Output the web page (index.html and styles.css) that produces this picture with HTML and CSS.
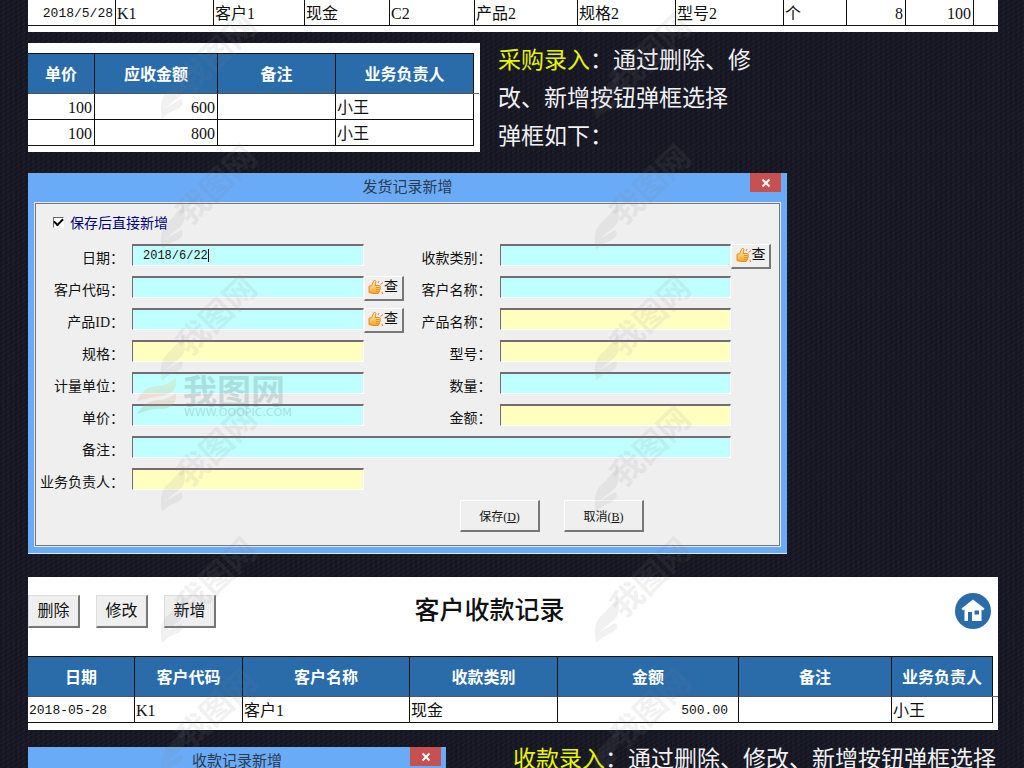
FILE: index.html
```html
<!DOCTYPE html>
<html lang="zh-CN">
<head>
<meta charset="utf-8">
<title>客户收款记录</title>
<link rel="stylesheet" href="styles.css">
</head>
<body>
<svg class="defs" aria-hidden="true">
  <defs>
    <linearGradient id="skin" x1="0" y1="0" x2="0" y2="1"><stop offset="0" stop-color="#fff0b0"/><stop offset="1" stop-color="#fba62c"/></linearGradient>
    <symbol id="hand" viewBox="0 0 16 16">
      <path d="M1 7.500L3.500 6.500L5.500 2.500Q6 .8 7.300 1.500Q8.200 2 7.700 4L7.100 6.500H11.500Q12.800 7 12.200 8.300Q12.800 9.300 11.900 10Q12.500 11 11.500 11.700Q12 12.800 11 13.300L10.200 14.500H4.500L1 13.500Z" fill="url(#skin)" stroke="#e58212" stroke-width=".9"/>
      <path d="M8 8.500h3.800M8 10.500h3.500M8 12.500h3" stroke="#e58212" stroke-width=".7"/>
      <path d="M10 4l1-2M12.500 5.500l2.500-2M13.800 13l1 2" stroke="#d08a3c" stroke-width="1"/>
    </symbol>
  </defs>
</svg>
<main class="page">
  <section class="panel panel-top">
    <table class="grid shipments">
      <colgroup><col><col><col><col><col><col><col><col><col><col><col><col></colgroup>
      <tbody><tr><td class="right date">2018/5/28</td><td>K1</td><td>客户1</td><td>现金</td><td>C2</td><td>产品2</td><td>规格2</td><td>型号2</td><td>个</td><td class="right">8</td><td class="right">100</td><td class="open"></td></tr></tbody>
    </table>
  </section>

  <div class="row intro">
    <section class="panel panel-price">
      <table class="grid prices">
        <colgroup><col><col><col><col></colgroup>
        <thead><tr><th>单价</th><th>应收金额</th><th>备注</th><th>业务负责人</th></tr></thead>
        <tbody>
          <tr><td class="right">100</td><td class="right">600</td><td></td><td>小王</td></tr>
          <tr><td class="right">100</td><td class="right">800</td><td></td><td>小王</td></tr>
        </tbody>
      </table>
    </section>
    <p class="note"><strong>采购录入</strong>：通过删除、修<br>改、新增按钮弹框选择<br>弹框如下：</p>
  </div>

  <section class="dialog dialog-ship">
    <header class="titlebar"><h2>发货记录新增</h2><button class="close" type="button" aria-label="关闭"><svg viewBox="0 0 10 10"><path d="M1.500 1.500l7 7M8.500 1.500l-7 7"/></svg></button></header>
    <form class="client">
      <label class="again"><input type="checkbox" checked>保存后直接新增</label>
      <div class="fields">
        <label for="date">日期：</label><input class="with-caret" id="date" type="text" value="2018/6/22"><span></span>
        <label for="kind">收款类别：</label><input id="kind" type="text"><button class="find" type="button"><svg><use href="#hand"/></svg>查</button>
        <label for="code">客户代码：</label><input id="code" type="text"><button class="find" type="button"><svg><use href="#hand"/></svg>查</button>
        <label for="cname">客户名称：</label><input id="cname" type="text"><span></span>
        <label for="pid">产品ID：</label><input id="pid" type="text"><button class="find" type="button"><svg><use href="#hand"/></svg>查</button>
        <label for="pname">产品名称：</label><input class="auto" id="pname" type="text"><span></span>
        <label for="spec">规格：</label><input class="auto" id="spec" type="text"><span></span>
        <label for="model">型号：</label><input class="auto" id="model" type="text"><span></span>
        <label for="unit">计量单位：</label><input id="unit" type="text"><span></span>
        <label for="qty">数量：</label><input id="qty" type="text"><span></span>
        <label for="price">单价：</label><input id="price" type="text"><span></span>
        <label for="sum">金额：</label><input class="auto" id="sum" type="text"><span></span>
        <label for="memo">备注：</label><input class="wide" id="memo" type="text"><span></span>
        <label for="owner">业务负责人：</label><input class="auto" id="owner" type="text">
      </div>
      <div class="actions"><button class="btn" type="button">保存(<u>D</u>)</button><button class="btn" type="button">取消(<u>B</u>)</button></div>
    </form>
  </section>

  <section class="panel panel-receipts">
    <header class="toolbar">
      <div class="tools"><button class="btn" type="button">删除</button><button class="btn" type="button">修改</button><button class="btn" type="button">新增</button></div>
      <h1>客户收款记录</h1>
      <a class="home" href="#" aria-label="首页"><svg viewBox="0 0 36 36"><circle cx="18" cy="18" r="18" fill="#2a6baa"/><path fill="#fff" fill-rule="evenodd" d="M18 6.500L29.500 15.500L28 17.500L26.500 16.500V28H17V19H13V28H9.500V16.500L8 17.500L6.500 15.500ZM19.500 17.500V21.500H24V17.500Z"/></svg></a>
    </header>
    <table class="grid receipts">
      <colgroup><col><col><col><col><col><col><col></colgroup>
      <thead><tr><th>日期</th><th>客户代码</th><th>客户名称</th><th>收款类别</th><th>金额</th><th>备注</th><th>业务负责人</th></tr></thead>
      <tbody><tr><td class="date">2018-05-28</td><td>K1</td><td>客户1</td><td>现金</td><td class="right date money">500.00</td><td></td><td>小王</td></tr></tbody>
    </table>
  </section>

  <div class="row outro">
    <section class="dialog dialog-receipt">
      <header class="titlebar"><h2>收款记录新增</h2><button class="close" type="button" aria-label="关闭"><svg viewBox="0 0 10 10"><path d="M1.500 1.500l7 7M8.500 1.500l-7 7"/></svg></button></header>
    </section>
    <p class="note"><strong>收款录入</strong>：通过删除、修改、新增按钮弹框选择</p>
  </div>

  <svg class="watermark" aria-hidden="true">
    <defs>
      <pattern id="mark" x="0" y="5" width="434" height="131" patternUnits="userSpaceOnUse">
        <g fill="#808080" fill-opacity=".11">
          <path d="M162 114Q158 94 168 86Q176 79 183 68Q188 84 180 91L164 104L181 94Q186 98 178 104Q170 106 162 114Z"/>
          <text class="mark-text" transform="translate(190 90) rotate(-44)">我图网</text>
        </g>
      </pattern>
      <linearGradient id="leaf" x1="0" y1="0" x2="0" y2="1"><stop offset="0" stop-color="#d8dc50"/><stop offset=".5" stop-color="#f0a080"/><stop offset="1" stop-color="#60b070"/></linearGradient>
    </defs>
    <rect width="100%" height="100%" fill="url(#mark)"/>
    <g opacity=".22">
      <path fill="url(#leaf)" d="M137 401Q142 387 158 386Q168 385 176 378Q178 392 165 395Q153 397 137 401ZM137 414Q146 399 160 400Q169 399 176 393Q177 407 163 409Q152 408 137 414Z"/>
      <text class="logo-text" x="183" y="404">我图网</text>
      <text class="logo-url" x="184" y="416">WWW.OOOPIC.COM</text>
    </g>
  </svg>
</main>
</body>
</html>
```
FILE: styles.css
```css
* { box-sizing: border-box; }
body {
  margin: 0;
  background-color: #191925;
  background-image:
    repeating-linear-gradient(90deg, rgba(0, 0, 0, .14) 0 2px, transparent 2px 5px),
    repeating-linear-gradient(150deg, rgba(80, 84, 110, .1) 0 1px, transparent 1px 4px);
  color: #111;
  font-family: "Liberation Serif", "Noto Sans CJK SC", sans-serif;
  font-size: 16px;
}
h1, h2, p { margin: 0; font-weight: 400; }
button, input { font: inherit; color: inherit; }
.defs { position: absolute; width: 0; height: 0; }
.page {
  position: relative;
  height: 100vh;
  overflow: hidden;
  padding: 0 26px 0 28px;
}
.panel { background: #fff; }
.row { display: flex; align-items: flex-start; }

/* Record tables */
.grid { width: 100%; table-layout: fixed; border-spacing: 0; }
.grid th, .grid td {
  border-right: 1px solid #111;
  border-bottom: 1px solid #111;
  white-space: nowrap;
}
.grid td { height: 26px; padding: 2px 2px 0 1px; line-height: 23px; }
.grid th {
  position: relative;
  height: 41px;
  padding: 2px 2px 0;
  line-height: 37px;
  border-top: 1px solid #111;
  border-bottom-color: #555;
  background: #2a6baa;
  color: #fff;
  font-weight: 700;
}
.grid th:last-child::after {
  content: "";
  position: absolute;
  left: 100%;
  bottom: -1px;
  width: 6px;
  height: 1px;
  background: #666;
}
.grid .open { border-right: 0; }
.grid .right { text-align: right; }
.grid .date { font-family: "Liberation Mono", monospace; font-size: 13px; }
.grid .money { padding-right: 10px; }

.shipments col:nth-child(1) { width: 88px; }
.shipments col:nth-child(2) { width: 98px; }
.shipments col:nth-child(3) { width: 91px; }
.shipments col:nth-child(4), .shipments col:nth-child(5) { width: 85px; }
.shipments col:nth-child(6) { width: 103px; }
.shipments col:nth-child(7) { width: 98px; }
.shipments col:nth-child(8) { width: 108px; }
.shipments col:nth-child(9) { width: 63px; }
.shipments col:nth-child(10) { width: 59px; }
.shipments col:nth-child(11) { width: 68px; }
.shipments col:nth-child(12) { width: 24px; }
.prices col:nth-child(1) { width: 67px; }
.prices col:nth-child(2) { width: 123px; }
.prices col:nth-child(3) { width: 118px; }
.prices col:nth-child(4) { width: 138px; }
.receipts col:nth-child(1) { width: 107px; }
.receipts col:nth-child(2) { width: 108px; }
.receipts col:nth-child(3) { width: 167px; }
.receipts col:nth-child(4) { width: 148px; }
.receipts col:nth-child(5) { width: 181px; }
.receipts col:nth-child(6) { width: 153px; }
.receipts col:nth-child(7) { width: 101px; }

.panel-top { padding-bottom: 6px; }
.intro { margin-top: 11px; gap: 18px; }
.panel-price { flex: 0 1 452px; padding: 10px 6px 6px 0; }
.panel-receipts { margin-top: 23px; padding: 16px 5px 7px 0; }

.note {
  color: #f2f2f5;
  font-family: "Noto Sans CJK SC", sans-serif;
  font-size: 23px;
  line-height: 38px;
}
.note strong { color: #e6f500; font-weight: inherit; }
.intro .note { margin: -4px 0 -1px; }

/* Dialog windows */
.dialog { background: #6aabf7; }
.dialog-ship {
  max-width: 759px;
  margin-top: 21px;
  padding: 0 6px 6px;
  border-bottom: 1px solid #dcebfb;
}
.titlebar { position: relative; height: 29px; }
.titlebar h2 {
  color: #2c3a4c;
  font-family: "Noto Sans CJK SC", sans-serif;
  font-size: 15px;
  line-height: 25px;
  text-align: center;
}
.close {
  position: absolute;
  top: 0;
  right: 0;
  display: grid;
  place-items: center;
  width: 31px;
  height: 19px;
  padding: 0;
  border: 0;
  background: #c75050;
}
.close svg { width: 10px; height: 10px; stroke: #fff; stroke-width: 2; }
.client {
  padding: 8px 9px 14px 0;
  border: 1px solid #e6e6e6;
  outline: 1px solid #777;
  outline-offset: -2px;
  background: #efefef;
}
.again {
  display: flex;
  align-items: center;
  gap: 6px;
  height: 22px;
  margin-left: 18px;
  color: #000080;
  font-size: 14px;
}
.again input {
  appearance: none;
  width: 11px;
  height: 11px;
  margin: 0;
  border: 1px solid #fff;
  border-top-color: #666;
  border-left-color: #666;
  background: #fff;
  display: grid;
  place-items: center;
}
.again input:checked::after {
  content: "";
  width: 7px;
  height: 4px;
  border: solid #000;
  border-width: 0 0 2px 2px;
  transform: translateY(-1px) rotate(-45deg);
}
.fields {
  display: grid;
  grid-template-columns: 97px minmax(0, 1fr) 40px 96px minmax(0, 1fr) 40px;
  grid-auto-rows: 32px;
  align-items: start;
  margin-top: 11px;
}
.fields label {
  padding: 5px 8px 0 0;
  font-size: 14px;
  line-height: 20px;
  text-align: right;
  white-space: nowrap;
}
.fields input {
  width: 100%;
  height: 22px;
  padding: 0 10px;
  border: 1px solid #fff;
  border-top: 2px solid #707070;
  border-left: 1px solid #707070;
  background: #c0ffff;
  font-family: "Liberation Mono", monospace;
  font-size: 12px;
}
.fields .auto { background: #ffffc0; }
.fields .wide { grid-column: span 4; }
.fields .with-caret {
  background: linear-gradient(#000, #000) 75px 3px / 1px 13px no-repeat #c0ffff;
}
.btn, .find {
  padding: 0;
  border: 1px solid #fff;
  border-right: 2px solid #777;
  border-bottom: 2px solid #777;
  background: #efefef;
}
.find {
  display: flex;
  align-items: center;
  justify-content: center;
  width: 40px;
  height: 25px;
  padding-bottom: 2px;
  font-size: 14px;
  line-height: 20px;
}
.find svg { width: 16px; height: 16px; }
.actions { display: flex; gap: 24px; margin-left: 425px; }
.actions .btn { width: 80px; height: 32px; font-size: 12px; }

/* Receipt records */
.toolbar {
  display: grid;
  grid-template-columns: 1fr auto 1fr;
  align-items: center;
  height: 63px;
  padding-bottom: 27px;
}
.tools { display: flex; gap: 16px; }
.tools .btn { width: 52px; height: 33px; line-height: 20px; border-left-color: #ddd; border-top-color: #ddd; }
.toolbar h1 { margin-right: 42px; font-size: 25px; font-weight: 500; line-height: 34px; }
.home { justify-self: end; width: 36px; height: 36px; margin-right: 2px; }
.home svg { display: block; width: 36px; height: 36px; }

.outro { margin-top: 17px; gap: 67px; }
.dialog-receipt { flex: 0 0 418px; height: 60px; padding: 0 5px; }
.outro .note { margin-top: -9px; white-space: nowrap; }

.watermark {
  position: absolute;
  top: 0;
  left: 0;
  width: 100%;
  height: 100%;
  pointer-events: none;
}
.mark-text, .logo-text { font-family: "Noto Sans CJK SC", sans-serif; font-weight: 700; }
.mark-text { font-size: 32px; }
.logo-text { font-size: 34px; fill: #557777; }
.logo-url { font-family: "DejaVu Sans", sans-serif; font-size: 11px; fill: #447777; }
```
